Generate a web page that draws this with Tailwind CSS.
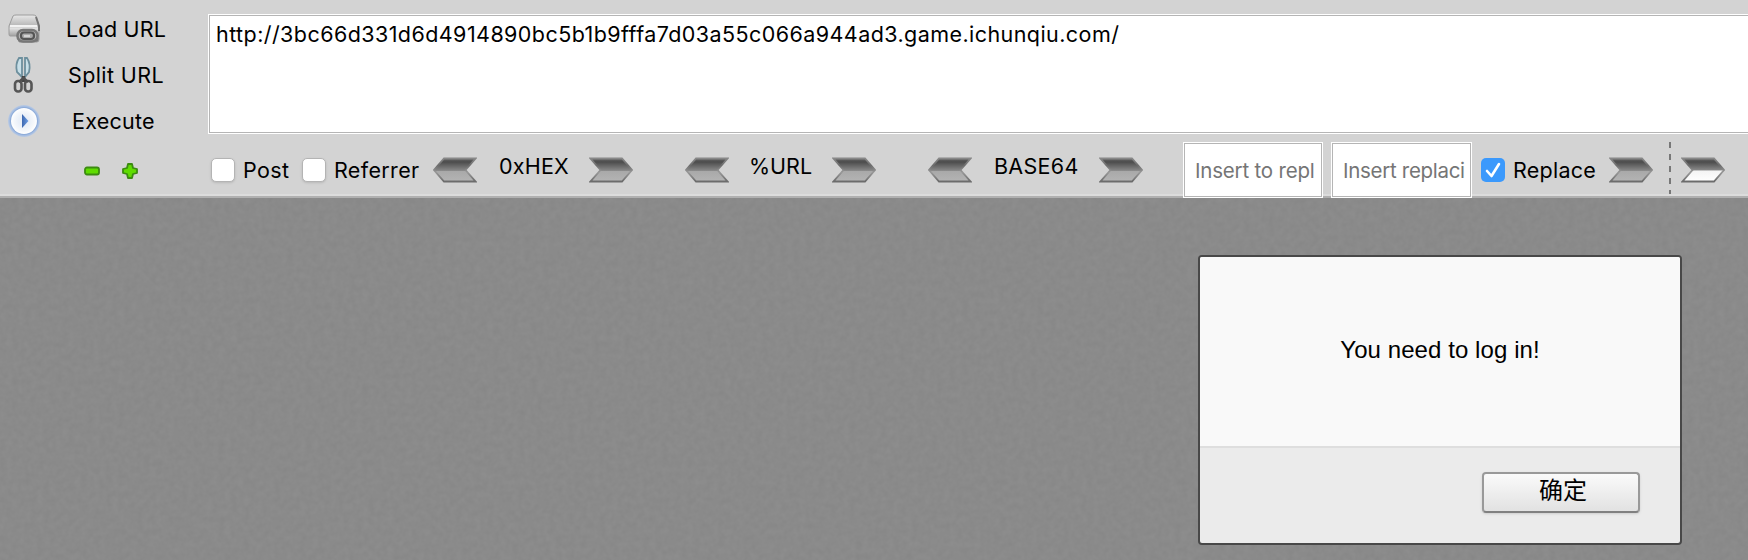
<!DOCTYPE html>
<html lang="en">
<head>
<meta charset="utf-8">
<title>Request bar</title>
<script src="https://cdn.jsdelivr.net/npm/@tailwindcss/browser@4"></script>
</head>
<body class="relative h-[560px] w-[1748px] overflow-hidden bg-[#8a8a8a] font-['Inter','Noto_Sans_CJK_SC',sans-serif] text-[21.5px] text-black">
<svg width="0" height="0" class="absolute">
  <defs>
    <linearGradient id="shade" x1="0" y1="0" x2="0" y2="1">
      <stop offset="0" stop-color="#686868"/><stop offset=".15" stop-color="#4c4c4c"/><stop offset=".52" stop-color="#888"/><stop offset=".56" stop-color="#a9a9a9"/><stop offset="1" stop-color="#b4b4b4"/>
    </linearGradient>
    <linearGradient id="shadeWhite" x1="0" y1="0" x2="0" y2="1">
      <stop offset="0" stop-color="#686868"/><stop offset=".15" stop-color="#4c4c4c"/><stop offset=".5" stop-color="#888"/><stop offset=".54" stop-color="#f4f4f4"/><stop offset="1" stop-color="#fff"/>
    </linearGradient>
    <linearGradient id="edge" x1="0" y1="0" x2="0" y2="1">
      <stop offset="0" stop-color="#888"/><stop offset=".3" stop-color="#6c6c6c"/><stop offset=".6" stop-color="#989898"/><stop offset="1" stop-color="#6c6c6c"/>
    </linearGradient>
    <symbol id="right" viewBox="0 0 44 26"><path d="M1.5 1.5H33L43 13L33 24.5H1.5L11.5 13Z" fill="url(#shade)" stroke="url(#edge)" stroke-width="1.8"/></symbol>
    <symbol id="rightWhite" viewBox="0 0 44 26"><path d="M1.5 1.5H33L43 13L33 24.5H1.5L11.5 13Z" fill="url(#shadeWhite)" stroke="url(#edge)" stroke-width="1.8"/></symbol>
    <symbol id="left" viewBox="0 0 44 26"><path d="M42.5 1.5H11L1 13L11 24.5H42.5L32.5 13Z" fill="url(#shade)" stroke="url(#edge)" stroke-width="1.8"/></symbol>
    <filter id="grain" x="0" y="0" width="100%" height="100%" color-interpolation-filters="sRGB">
      <feTurbulence type="fractalNoise" baseFrequency=".16" numOctaves="2" seed="4"/>
      <feColorMatrix values=".035 0 0 0 .524  .035 0 0 0 .524  .035 0 0 0 .524  0 0 0 0 1"/>
    </filter>
  </defs>
</svg>
<header class="relative z-10 flex h-[198px] bg-[linear-gradient(#d3d3d3_0_194px,#dcdcdc_194px_196px,#b0b0b0_196px)]">
  <nav class="w-[208px] shrink-0 pt-[6px] whitespace-nowrap">
    <div class="flex h-[46px] items-center pl-2">
      <svg class="w-8 shrink-0" height="32" viewBox="0 0 32 32">
        <defs><linearGradient id="pr" x1="0" y1="0" x2="0" y2="1"><stop offset="0" stop-color="#e8e8e8"/><stop offset=".35" stop-color="#bcbcbc"/><stop offset=".5" stop-color="#e0e0e0"/><stop offset="1" stop-color="#6c6c6c"/></linearGradient></defs>
        <path d="M5 3Q6 2 8 2H25Q27 2 28 3L31 13V26Q31 29 29 29H11L9 23H2Q1 23 1 21V13Z" fill="url(#pr)" stroke="#9c9c9c"/>
        <path d="M2 13H29" stroke="#f2f2f2" stroke-width="2"/>
        <path d="M28 4L31 13V18" fill="none" stroke="#747474" stroke-width="2"/>
        <rect x="9.5" y="17" width="20" height="11.5" rx="5.5" fill="#b5b5b5" stroke="#777" stroke-width="2.5"/>
        <rect x="13" y="19.5" width="13" height="6.5" rx="3" fill="#aaa" stroke="#555" stroke-width="2.2"/>
        <path d="M16 23H22" stroke="#e0e0e0" stroke-width="1.5"/>
      </svg>
      <span class="ml-[26px] tracking-[0.2px]">Load URL</span>
    </div>
    <div class="flex h-[46px] items-center pl-2">
      <svg class="w-8 shrink-0" height="38" viewBox="0 0 32 38">
        <path d="M11 2Q7 8 9 16L14 21V2Z" fill="#c7dfe8" stroke="#6d8f9d" stroke-width="1.8"/>
        <path d="M19 2Q23 8 21 16L17 21V2Z" fill="#c7dfe8" stroke="#6d8f9d" stroke-width="1.8"/>
        <path d="M15.5 20V26" stroke="#444" stroke-width="3.4"/>
        <rect x="7" y="25" width="6.5" height="10.5" rx="3" fill="none" stroke="#565656" stroke-width="2.6"/>
        <rect x="17" y="25" width="6.5" height="10.5" rx="3" fill="none" stroke="#565656" stroke-width="2.6"/>
        <path d="M11 26L15.5 22L20 26" fill="none" stroke="#505050" stroke-width="2.5"/>
      </svg>
      <span class="ml-[28px] tracking-[0.4px]">Split URL</span>
    </div>
    <div class="flex h-[46px] items-center pl-2">
      <svg class="w-8 shrink-0" height="32" viewBox="0 0 32 32">
        <defs>
          <radialGradient id="halo"><stop offset=".8" stop-color="#7d9fd2"/><stop offset=".9" stop-color="#a3bce2"/><stop offset="1" stop-color="#bccbe2"/></radialGradient>
          <radialGradient id="disc"><stop offset=".4" stop-color="#e9eff8"/><stop offset=".75" stop-color="#f4f7fb"/><stop offset="1" stop-color="#fff"/></radialGradient>
          <linearGradient id="play"><stop offset="0" stop-color="#3d68b0"/><stop offset="1" stop-color="#6e9fe6"/></linearGradient>
        </defs>
        <circle cx="16" cy="16" r="16" fill="url(#halo)"/><circle cx="16" cy="16" r="13" fill="url(#disc)"/>
        <path d="M14 9L20.5 16L14 23Z" fill="url(#play)"/>
      </svg>
      <span class="ml-[32px] tracking-[0.25px]">Execute</span>
    </div>
    <div class="flex h-[54px] items-center gap-[22px] pl-[84px]">
      <svg width="16" height="16" viewBox="0 0 16 16"><rect x="1" y="4.5" width="14" height="7" rx="2" fill="#5fdc00" stroke="#3b8b10" stroke-width="1.8"/></svg>
      <svg width="16" height="16" viewBox="0 0 16 16"><path d="M6 1H10L11 5L15 6V10L11 11L10 15H6L5 11L1 10V6L5 5Z" fill="#5fdc00" stroke="#3b8b10" stroke-width="1.8" stroke-linejoin="round"/></svg>
    </div>
  </nav>
  <main class="w-[1540px] pt-[14px]">
    <div class="h-[120px] border-y border-l border-white">
      <div class="h-[118px] border-y border-l border-[#b5b5b5] bg-white pt-1 pl-[6px] leading-[28px] tracking-[0.43px] whitespace-nowrap">http://3bc66d331d6d4914890bc5b1b9fffa7d03a55c066a944ad3.game.ichunqiu.com/</div>
    </div>
    <div class="flex h-[56px] pt-2 leading-[28px] whitespace-nowrap [&>*]:shrink-0">
      <i class="mt-4 ml-[3px] h-6 w-6 rounded-[5px] border border-[#b4b4b4] bg-white shadow-sm"></i>
      <span class="mt-[14px] ml-2 w-[59px] tracking-[0.4px]">Post</span>
      <i class="mt-4 h-6 w-6 rounded-[5px] border border-[#b4b4b4] bg-white shadow-sm"></i>
      <span class="mt-[14px] ml-2 w-[99px] tracking-[0.35px]">Referrer</span>
      <svg class="mt-[14.5px]" width="44" height="26"><use href="#left"/></svg>
      <span class="mt-[10px] ml-[22px] w-[90px] tracking-[0.2px]">0xHEX</span>
      <svg class="mt-[14.5px]" width="44" height="26"><use href="#right"/></svg>
      <svg class="mt-[14.5px] ml-[52px]" width="44" height="26"><use href="#left"/></svg>
      <span class="mt-[10px] ml-5 w-[83px]">%URL</span>
      <svg class="mt-[14.5px]" width="44" height="26"><use href="#right"/></svg>
      <svg class="mt-[14.5px] ml-[52px]" width="44" height="26"><use href="#left"/></svg>
      <span class="mt-[10px] ml-[22px] w-[105px] tracking-[0.3px]">BASE64</span>
      <svg class="mt-[14.5px]" width="44" height="26"><use href="#right"/></svg>
      <div class="ml-[40px] h-[56px] w-[140px] border border-white"><div class="h-[54px] border border-[#b5b5b5] bg-white pt-[13px] pl-[10px] text-[20.5px] tracking-[-0.2px] text-[#757575]">Insert to repl</div></div>
      <div class="ml-2 h-[56px] w-[141px] border border-white"><div class="h-[54px] border border-[#b5b5b5] bg-white pt-[13px] pl-[10px] text-[20.5px] tracking-[-0.3px] text-[#757575]">Insert replaci</div></div>
      <svg class="mt-4 ml-[9px]" width="24" height="24" viewBox="0 0 24 24"><rect width="24" height="24" rx="5" fill="#3b99fc"/><path d="M6 13L10.5 18L18 6" fill="none" stroke="#fff" stroke-width="2.6" stroke-linecap="round" stroke-linejoin="round"/></svg>
      <span class="mt-[14px] ml-2 w-[96px] tracking-[0.25px]">Replace</span>
      <svg class="mt-[14.5px]" width="44" height="26"><use href="#right"/></svg>
      <i class="ml-4 h-[52px] w-[2px] bg-[repeating-linear-gradient(#777_0_6px,transparent_6px_12px)]"></i>
      <svg class="mt-[14.5px] ml-[10px]" width="44" height="26"><use href="#rightWhite"/></svg>
    </div>
  </main>
</header>
<svg class="block" width="1748" height="362"><rect width="1748" height="362" filter="url(#grain)"/></svg>
<section role="dialog" class="absolute top-[255px] left-[1198px] h-[290px] w-[484px] overflow-hidden rounded-[4px] border-2 border-[#484848] bg-[#ebebeb]">
  <div class="flex h-[191px] items-center justify-center border-b-2 border-[#dedede] bg-[#f9f9f9] pb-1 font-['Liberation_Sans',sans-serif] text-[24px] tracking-[0.08px] whitespace-nowrap">You need to log in!</div>
  <div class="flex justify-end pt-[24px] pr-10">
    <button class="h-[41px] w-[158px] rounded-[4px] border-2 border-[#999] border-b-[#808080] bg-linear-to-b from-[#fafafa] to-[#e2e2e2] pb-1 pl-1 font-['Noto_Sans_CJK_SC',sans-serif] text-[24px] leading-[30px] shadow-sm"><span class="block -translate-y-[2px]">确定</span></button>
  </div>
</section>
</body>
</html>
